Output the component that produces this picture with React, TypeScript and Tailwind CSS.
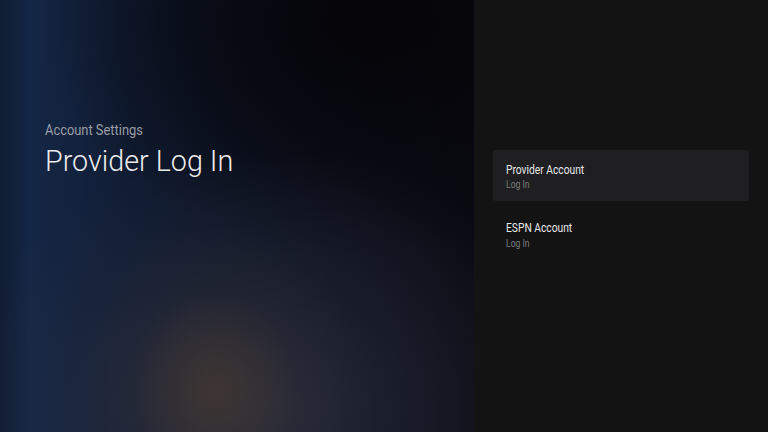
import React from "react";

function Item({ title, sub, focused }: { title: string; sub: string; focused?: boolean }) {
  return (
    <div
      className={`rounded-[3px] pl-[13px] pr-3 pt-[11.5px] pb-[10px] ${focused ? "bg-[#1f1f21]" : ""}`}
    >
      <div className="origin-left scale-x-[0.82] whitespace-nowrap text-[12.5px] leading-[15px] font-normal text-[#e8e8e8]">
        {title}
      </div>
      <div className="mt-[2.5px] origin-left scale-x-[0.82] whitespace-nowrap text-[10.5px] leading-[12px] text-[#7c7c7e]">
        {sub}
      </div>
    </div>
  );
}

export default function App() {
  return (
    <div className="flex h-[432px] w-[768px] overflow-hidden [font-family:Roboto,'Noto_Sans',sans-serif]">
      <div className="w-[474px] shrink-0 pl-[45px] pt-[122px] [background:radial-gradient(ellipse_18%_22%_at_45%_90%,rgba(80,62,48,0.5),transparent),radial-gradient(ellipse_32%_40%_at_46%_92%,rgba(58,52,52,0.45),transparent),radial-gradient(ellipse_65%_60%_at_55%_95%,rgba(42,46,62,0.85),transparent),radial-gradient(ellipse_70%_55%_at_78%_5%,#050509_0%,rgba(5,5,9,0.6)_50%,transparent_100%),linear-gradient(90deg,#0f1c31_0%,#142746_6%,#13233f_14%,#101c33_28%,#0e1628_45%,#0c0f1c_72%,#0a0a12_100%)]">
        <div className="origin-left scale-x-[0.92] whitespace-nowrap text-[14px] leading-[16px] text-[#9a9ea6]">
          Account Settings
        </div>
        <div className="mt-[7px] origin-left scale-x-[0.99] whitespace-nowrap text-[29px] leading-[32px] font-light text-[#ececec]">
          Provider Log In
        </div>
      </div>
      <div className="flex flex-1 flex-col gap-[7.5px] bg-[#131313] pl-[19px] pr-[19px] pt-[150px]">
        <Item title="Provider Account" sub="Log In" focused />
        <Item title="ESPN Account" sub="Log In" />
      </div>
    </div>
  );
}
